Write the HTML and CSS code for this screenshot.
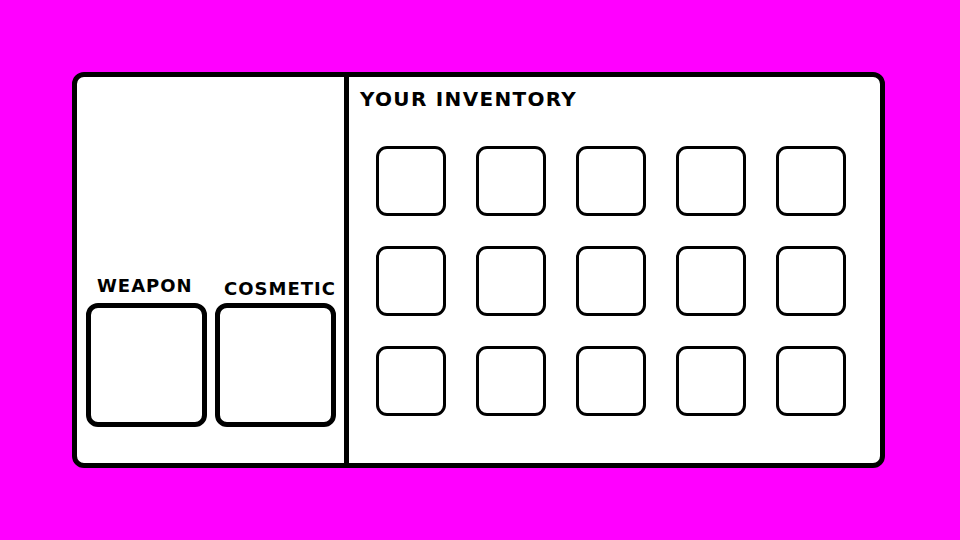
FILE: index.html
```html
<!DOCTYPE html>
<html lang="en">
<head>
    <meta charset="UTF-8">
    <meta name="viewport" content="width=device-width, initial-scale=1.0">
    <title>Inventory</title>
    <link rel="stylesheet" href="styles.css">
</head>
<body>
    <div class="panel">
        <div class="equip-section">
            <div class="equip-slot">
                <div class="equip-label">WEAPON</div>
                <div class="equip-box"></div>
            </div>
            <div class="equip-slot cosmetic">
                <div class="equip-label">COSMETIC</div>
                <div class="equip-box"></div>
            </div>
        </div>

        <div class="inventory-section">
            <h2 class="inventory-title">YOUR INVENTORY</h2>
            <div class="inventory-grid">
                <div class="item-slot"></div>
                <div class="item-slot"></div>
                <div class="item-slot"></div>
                <div class="item-slot"></div>
                <div class="item-slot"></div>
                <div class="item-slot"></div>
                <div class="item-slot"></div>
                <div class="item-slot"></div>
                <div class="item-slot"></div>
                <div class="item-slot"></div>
                <div class="item-slot"></div>
                <div class="item-slot"></div>
                <div class="item-slot"></div>
                <div class="item-slot"></div>
                <div class="item-slot"></div>
            </div>
        </div>
    </div>
</body>
</html>
```

FILE: styles.css
```css
* {
    box-sizing: border-box;
}
body {
    margin: 0;
    background-color: #ff00ff;
    font-family: Verdana, 'DejaVu Sans', sans-serif;
    font-weight: bold;
    color: #000;
}
.panel {
    display: flex;
    width: 813px;
    height: 396px;
    margin: 72px 0 0 72px;
    background-color: #fff;
    border: 5px solid #000;
    border-radius: 12px;
}
.equip-section {
    display: flex;
    align-items: flex-end;
    gap: 8px;
    width: 272px;
    padding: 0 0 36px 9px;
    border-right: 5px solid #000;
}
.equip-slot {
    display: flex;
    flex-direction: column;
}
.equip-label {
    padding-left: 11px;
    font-size: 18px;
    line-height: 20px;
    letter-spacing: 1px;
    margin-bottom: 7px;
}
.cosmetic .equip-label {
    padding-left: 9px;
    margin-bottom: 4px;
}
.equip-box {
    width: 121px;
    height: 124px;
    border: 5px solid #000;
    border-radius: 12px;
}
.inventory-section {
    flex: 1;
    padding: 11px 0 0 11px;
}
.inventory-title {
    margin: 0 0 36px;
    font-size: 20px;
    line-height: 22px;
    letter-spacing: 1.3px;
}
.inventory-grid {
    display: grid;
    grid-template-columns: repeat(5, 70px);
    gap: 30px;
    margin-left: 16px;
}
.item-slot {
    height: 70px;
    border: 3px solid #000;
    border-radius: 11px;
}
```
